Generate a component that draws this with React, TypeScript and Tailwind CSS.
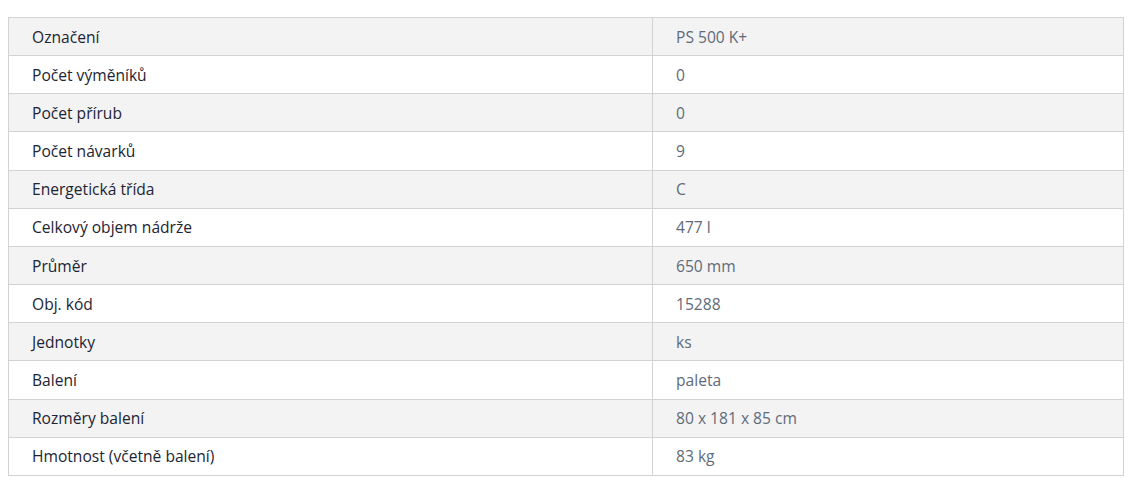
import React from "react";

const rows: [string, string][] = [
  ["Označení", "PS 500 K+"],
  ["Počet výměníků", "0"],
  ["Počet přírub", "0"],
  ["Počet návarků", "9"],
  ["Energetická třída", "C"],
  ["Celkový objem nádrže", "477 l"],
  ["Průměr", "650 mm"],
  ["Obj. kód", "15288"],
  ["Jednotky", "ks"],
  ["Balení", "paleta"],
  ["Rozměry balení", "80 x 181 x 85 cm"],
  ["Hmotnost (včetně balení)", "83 kg"],
];

export default function App() {
  return (
    <div className="w-[1135px] h-[496px] bg-white pt-[17px] pl-[8px]" style={{ fontFamily: '"Open Sans", sans-serif' }}>
      <table className="w-[1116px] border-collapse text-[15.6px] leading-[22px]">
        <tbody>
          {rows.map(([k, v], i) => (
            <tr key={i} className={i % 2 === 0 ? "bg-[#f3f3f3]" : "bg-white"}>
              <td className="w-[644px] h-[38.17px] border border-[#d2d2d2] pl-[23px] py-0 text-[#1d2433] align-middle">{k}</td>
              <td className="h-[38.17px] border border-[#d2d2d2] pl-[23px] py-0 text-[#5f6b7a] align-middle">{v}</td>
            </tr>
          ))}
        </tbody>
      </table>
    </div>
  );
}
